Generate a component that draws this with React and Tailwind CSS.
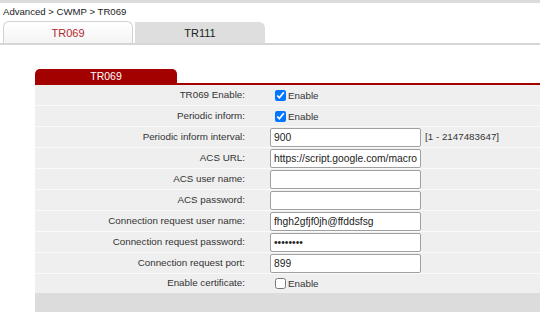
import React from "react";

const rows = [
  { label: "TR069 Enable:", type: "check", checked: true, h: "h-[20px]" },
  { label: "Periodic inform:", type: "check", checked: true, h: "h-[21px]" },
  { label: "Periodic inform interval:", type: "text", value: "900", hint: "[1 - 2147483647]", h: "h-[21px]" },
  { label: "ACS URL:", type: "text", value: "https://script.google.com/macros/s/AKfycb", h: "h-[21px]" },
  { label: "ACS user name:", type: "text", value: "", h: "h-[21px]" },
  { label: "ACS password:", type: "text", value: "", h: "h-[21px]" },
  { label: "Connection request user name:", type: "text", value: "fhgh2gfjf0jh@ffddsfsg", h: "h-[21px]" },
  { label: "Connection request password:", type: "password", value: "12345678", h: "h-[21px]" },
  { label: "Connection request port:", type: "text", value: "899", h: "h-[21px]" },
  { label: "Enable certificate:", type: "check", checked: false, h: "h-[20px]" },
];

function Row({ row, first }) {
  return (
    <div className={`flex items-center ${row.h} bg-[#efefef] ${first ? "" : "border-t border-[#fafafa]"}`}>
      <div className="w-[230px] pr-[20px] text-right text-[9.8px] text-[#333]">{row.label}</div>
      <div className="flex items-center pl-[5px]">
        {row.type === "check" ? (
          <label className="flex items-center ml-[5px] text-[9.8px] text-[#333]">
            <input type="checkbox" defaultChecked={row.checked} className="w-[11px] h-[11px] m-0" />
            <span className="ml-[2px] mt-[2px]">Enable</span>
          </label>
        ) : (
          <>
            <input
              type={row.type}
              defaultValue={row.value}
              readOnly
              className="w-[151px] h-[19px] border border-[#a0a0a0] rounded-[2px] bg-white px-[3px] text-[10.3px] text-[#222] outline-none"
            />
            {row.hint && <span className="ml-[4px] text-[9.8px] text-[#333]">{row.hint}</span>}
          </>
        )}
      </div>
    </div>
  );
}

function App() {
  return (
    <div className="w-[540px] h-[312px] overflow-hidden bg-white font-['Liberation_Sans',Arial,sans-serif]">
      {/* top strip */}
      <div className="h-[3px] bg-[#dcdcdc]" />

      {/* breadcrumb */}
      <div className="h-[18px] pl-[3px] leading-[17px] text-[9.6px] text-[#222]">Advanced &gt; CWMP &gt; TR069</div>

      {/* tabs */}
      <div className="flex items-end h-[24px] pl-[3px] border-b-2 border-[#d6d6d6]">
        <div className="w-[130px] h-[22px] rounded-t-[6px] border border-b-0 border-[#d2d2d2] bg-gradient-to-b from-white to-[#f4f4f4] text-center leading-[22px] text-[11px] text-[#b3282d]">
          TR069
        </div>
        <div className="ml-[2px] w-[130px] h-[21px] rounded-tr-[6px] bg-[#dedede] text-center leading-[22px] text-[11px] text-[#222]">
          TR111
        </div>
      </div>

      {/* section */}
      <div className="ml-[35px] mt-[24px] flex flex-col">
        <div className="w-[142px] h-[14px] rounded-t-[5px] bg-[#a30000] text-center leading-[14px] text-[10.5px] text-white">
          TR069
        </div>
        <div className="h-[2px] bg-[#a30000]" />
        {rows.map((r, i) => (
          <Row key={r.label} row={r} first={i === 0} />
        ))}
        <div className="h-[22px] bg-[#dcdcdc]" />
      </div>
    </div>
  );
}

export default App;
